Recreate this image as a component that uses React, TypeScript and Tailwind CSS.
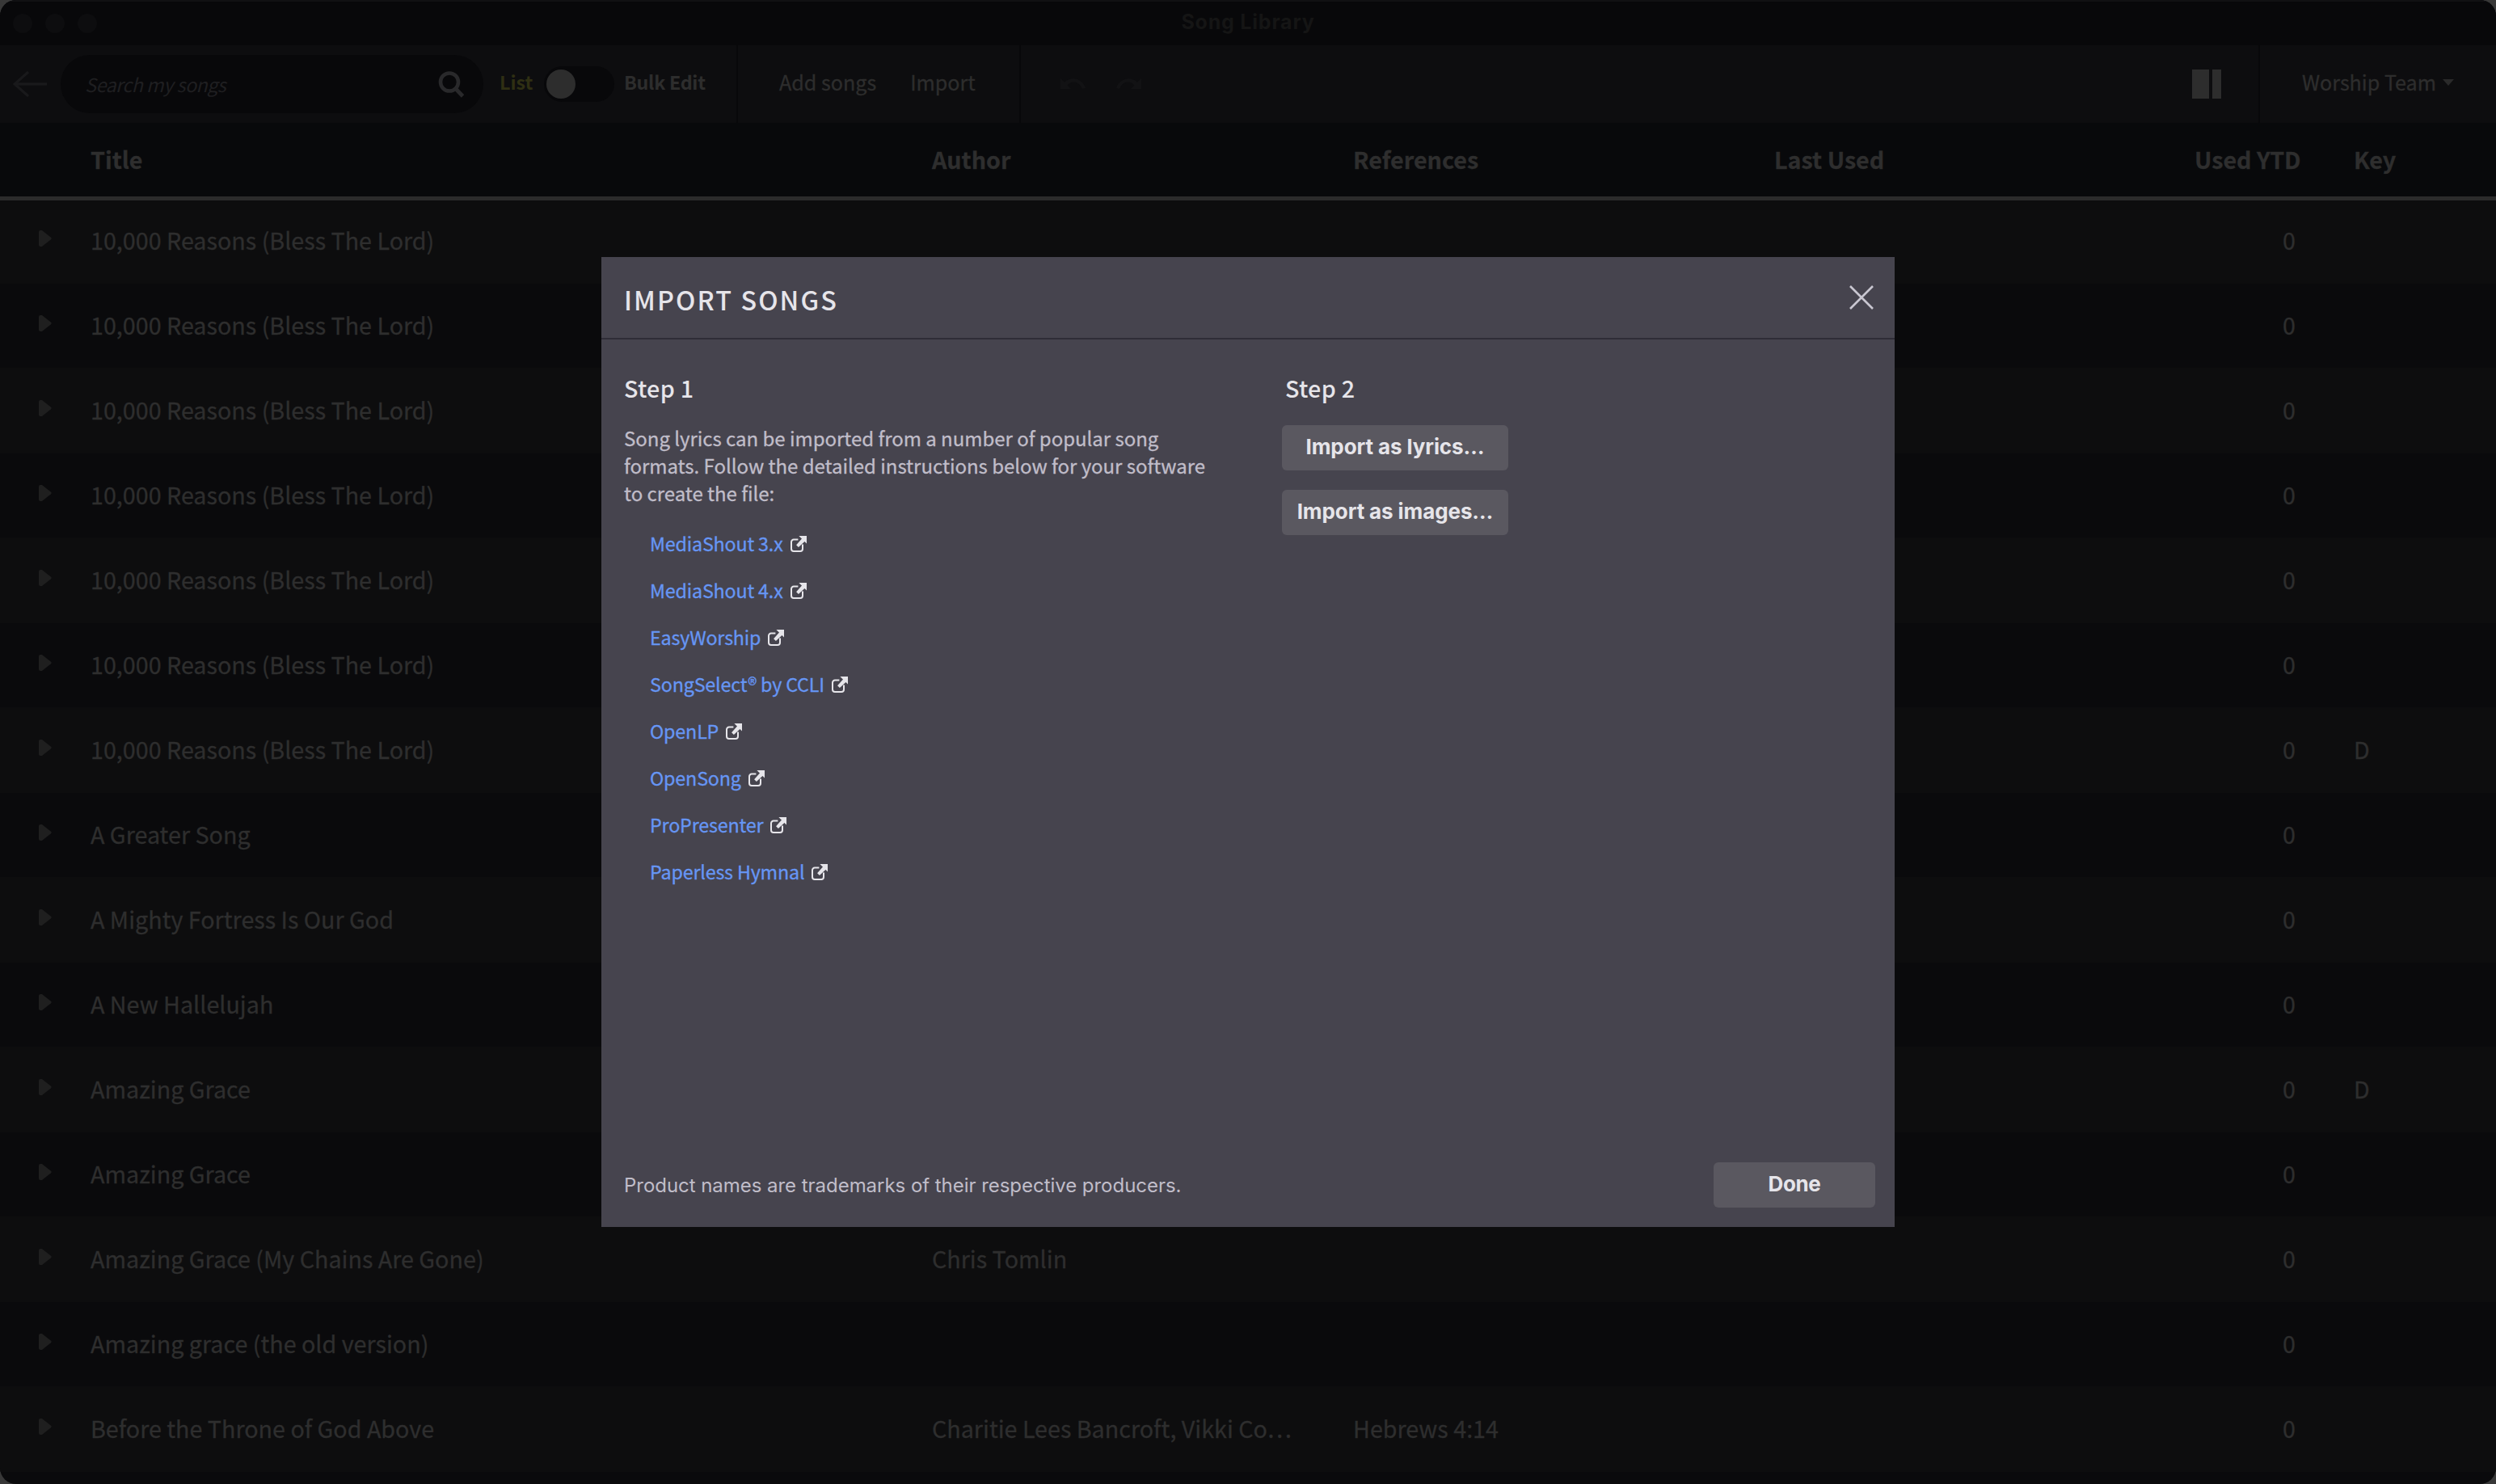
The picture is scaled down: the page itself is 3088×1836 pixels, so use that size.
import React from "react";

type Song = { title: string; author?: string; refs?: string; musicKey?: string };

const SONGS: Song[] = [
  { title: "10,000 Reasons (Bless The Lord)" },
  { title: "10,000 Reasons (Bless The Lord)" },
  { title: "10,000 Reasons (Bless The Lord)" },
  { title: "10,000 Reasons (Bless The Lord)" },
  { title: "10,000 Reasons (Bless The Lord)" },
  { title: "10,000 Reasons (Bless The Lord)" },
  { title: "10,000 Reasons (Bless The Lord)", musicKey: "D" },
  { title: "A Greater Song" },
  { title: "A Mighty Fortress Is Our God" },
  { title: "A New Hallelujah" },
  { title: "Amazing Grace", musicKey: "D" },
  { title: "Amazing Grace" },
  { title: "Amazing Grace (My Chains Are Gone)", author: "Chris Tomlin" },
  { title: "Amazing grace (the old version)" },
  {
    title: "Before the Throne of God Above",
    author: "Charitie Lees Bancroft, Vikki Co…",
    refs: "Hebrews 4:14",
  },
];

const GUIDES = [
  "MediaShout 3.x",
  "MediaShout 4.x",
  "EasyWorship",
  "SongSelect® by CCLI",
  "OpenLP",
  "OpenSong",
  "ProPresenter",
  "Paperless Hymnal",
];

const COLUMNS = "grid grid-cols-[112px_1041px_521px_521px_520px_197px_1fr] items-center";

function UndoIcon({ className = "" }: { className?: string }) {
  return (
    <svg viewBox="0 0 32 14" className={`h-3.5 w-8 ${className}`}>
      <path d="M0 0L0 13H13L8.6 8.6C12 3.5 22 1.5 27 13L31 12C27-1 12-3 5 4.8Z" fill="#121214" />
    </svg>
  );
}

function ExternalIcon() {
  return (
    <svg viewBox="0 0 20 20" className="size-5 shrink-0" fill="none">
      <path
        d="M9.4 4.6H4A3 3 0 0 0 1 7.6V16A3 3 0 0 0 4 19H12A3 3 0 0 0 15 16V10.4"
        stroke="#e6e5ea"
        strokeWidth="2"
      />
      <path d="M10.4 0H20V9.6L17.4 7L9.9 14L7.1 11.2L14 3.4L12.6 2.2Z" fill="#e6e5ea" />
    </svg>
  );
}

function Toolbar() {
  return (
    <div className="flex h-24 bg-[#0d0d0f]">
      <div className="flex w-[913px] items-center border-r-2 border-[#08080a] pl-4">
        <svg viewBox="0 0 42 32" className="h-8 w-[42px]" fill="none" stroke="#19191b">
          <path d="M19 1L2 16L19 31" strokeWidth="3.2" />
          <path d="M2 16H42" strokeWidth="3.6" />
        </svg>
        <div className="ml-[17px] flex h-[72px] w-[523px] items-center justify-between rounded-full bg-[#08080a] pr-[23px] pl-[30px]">
          <span className="pt-0.5 text-[23.3px] leading-none tracking-[-0.5px] text-[#1f1f21] italic">
            Search my songs
          </span>
          <svg viewBox="0 0 33 33" className="size-[33px]" fill="none" stroke="#29292b">
            <circle cx="14" cy="13.5" r="11" strokeWidth="4.6" />
            <path d="M21.5 21.5L30.5 31" strokeWidth="4.8" />
          </svg>
        </div>
        <span className="ml-5 w-[55px] pb-1 text-[23.3px] leading-none font-bold text-[#2f2f13]">List</span>
        <div className="flex h-11 w-[87px] items-center rounded-full bg-[#08080a] pl-[3px]">
          <div className="size-9 rounded-full bg-[#2d2d2d]" />
        </div>
        <span className="ml-3 pb-1 text-[23.3px] leading-none font-bold tracking-[-0.3px] text-[#2d2d2d]">
          Bulk Edit
        </span>
      </div>
      <div className="flex w-[350px] items-center gap-[42px] border-r-2 border-[#08080a] pb-1 pl-[51px] text-[25.1px] leading-none text-[#2d2d2d] [-webkit-text-stroke:0.3px]">
        <span>Add songs</span>
        <span>Import</span>
      </div>
      <div className="flex flex-1 items-center gap-9 pl-[49px]">
        <UndoIcon />
        <UndoIcon className="-scale-x-100" />
      </div>
      <div className="flex items-center gap-1 border-r-2 border-[#08080a] pr-[46px]">
        <div className="h-9 w-[21px] bg-[#2d2d2d]" />
        <div className="h-9 w-[11px] bg-[#2d2d2d]" />
      </div>
      <div className="flex w-[292px] items-center pb-1 pl-[52px] text-[25.1px] leading-none text-[#2d2d2d] [-webkit-text-stroke:0.3px]">
        <span className="w-[174px] whitespace-nowrap">Worship Team</span>
        <svg viewBox="0 0 14 8" className="h-2 w-3.5">
          <path d="M0 0H14L7 8Z" fill="#2a2a2a" />
        </svg>
      </div>
    </div>
  );
}

function SongTable() {
  return (
    <div className="text-[28.7px] leading-none text-[#2e2e2e] [-webkit-text-stroke:0.3px]">
      <div className={`${COLUMNS} h-24 border-b-[5px] border-[#2b2b2b] bg-[#08090b] font-bold`}>
        <span />
        <span>Title</span>
        <span>Author</span>
        <span>References</span>
        <span>Last Used</span>
        <span>Used YTD</span>
        <span>Key</span>
      </div>
      <div>
        {SONGS.map((song, i) => (
          <div
            key={i}
            className={`${COLUMNS} h-[105px] pb-0.5 first:h-[103px] first:pb-1 odd:bg-[#0d0d0e] even:border-b even:border-[#0d0d0e] even:bg-[#0a0a0c] even:pb-px`}
          >
            <svg viewBox="0 0 16 20" className="mb-1.5 ml-12 h-5 w-4">
              <path
                d="M2 0H4L15 8.8Q16.4 10 15 11.2L4 20H2Q0 20 0 18V2Q0 0 2 0Z"
                fill="#1f1f1f"
              />
            </svg>
            <span>{song.title}</span>
            <span>{song.author}</span>
            <span>{song.refs}</span>
            <span />
            <span className="pr-[72px] text-right">0</span>
            <span>{song.musicKey}</span>
          </div>
        ))}
      </div>
    </div>
  );
}

function ImportDialog() {
  return (
    <div className="absolute top-[318px] left-[744px] flex h-[1200px] w-[1600px] flex-col bg-[#46444e]">
      <div className="flex h-[102px] items-center justify-between border-b-2 border-[#2f2d37] pr-[26px] pl-7">
        <h2 className="pt-1 text-[32.3px] leading-none font-medium tracking-[2.1px] text-[#e6e5ea]">
          IMPORT SONGS
        </h2>
        <svg viewBox="0 0 30 30" className="size-[30px]" stroke="#c9c7d1" strokeWidth="2.6">
          <path d="M1 1L29 29M29 1L1 29" />
        </svg>
      </div>
      <div className="flex flex-1 pt-10 text-[#e6e5ea]">
        <div className="w-[842px] pl-7">
          <h3 className="h-10 text-[28.7px] leading-10 font-medium tracking-[0.3px]">Step 1</h3>
          <p className="mt-[25px] w-[740px] text-[24px] leading-[34.2px] tracking-[-0.03px] text-[#c0bdc9] [-webkit-text-stroke:0.3px]">
            Song lyrics can be imported from a number of popular song
            <br />
            formats. Follow the detailed instructions below for your software
            <br />
            to create the file:
          </p>
          <ul className="mt-[16.4px] pl-8">
            {GUIDES.map((name) => (
              <li key={name} className="flex h-[58px] items-center gap-[9px]">
                <a className="text-[23.3px] leading-none tracking-[-0.18px] text-[#6696f5] [-webkit-text-stroke:0.3px]">
                  {name}
                </a>
                <ExternalIcon />
              </li>
            ))}
          </ul>
        </div>
        <div className="flex flex-col items-start">
          <h3 className="h-10 pl-1 text-[28.7px] leading-10 font-medium tracking-[0.3px]">Step 2</h3>
          <button className="mt-[26px] h-14 w-[280px] rounded-md bg-[#5a5860] pb-[3px] font-[Inter] text-[26px] leading-none font-bold tracking-[-0.1px]">
            Import as lyrics…
          </button>
          <button className="mt-6 h-14 w-[280px] rounded-md bg-[#5a5860] pb-[3px] font-[Inter] text-[26px] leading-none font-bold tracking-[-0.1px]">
            Import as images…
          </button>
        </div>
      </div>
      <div className="flex items-center justify-between pr-6 pb-6 pl-7 font-[Inter]">
        <p className="pt-0.5 text-[24px] leading-none tracking-[-0.04px] text-[#c0bdc9]">
          Product names are trademarks of their respective producers.
        </p>
        <button className="h-14 w-[200px] rounded-md bg-[#5a5860] pb-[3px] text-[26px] leading-none font-bold tracking-[-0.4px] text-[#e6e5ea]">
          Done
        </button>
      </div>
    </div>
  );
}

export default function App() {
  return (
    <div className="h-[1836px] w-[3088px] overflow-hidden bg-[#383838] font-['Noto_Sans_CJK_SC',sans-serif]">
      <div className="relative h-full w-full overflow-hidden rounded-[20px] bg-[#0a0a0c]">
        <div className="flex h-14 items-center border-t-2 border-[#111113] bg-[#08080a] px-4">
          <div className="flex w-[400px] gap-4">
            <div className="size-6 rounded-full bg-[#0d0d0f]" />
            <div className="size-6 rounded-full bg-[#0d0d0f]" />
            <div className="size-6 rounded-full bg-[#0d0d0f]" />
          </div>
          <h1 className="flex-1 pb-1 text-center font-[Inter] text-[25px] leading-none font-bold tracking-[0.8px] text-[#151515]">
            Song Library
          </h1>
          <div className="w-[400px]" />
        </div>
        <Toolbar />
        <SongTable />
        <ImportDialog />
      </div>
    </div>
  );
}
